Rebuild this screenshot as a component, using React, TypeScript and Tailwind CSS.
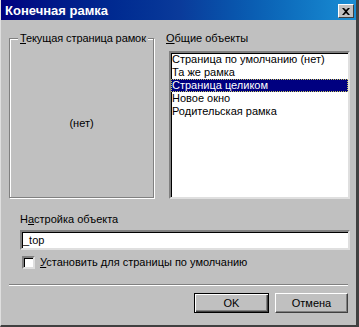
const font = { fontFamily: '"Liberation Sans", Arial, sans-serif' };

export default function App() {
  const items = [
    "Страница по умолчанию (нет)",
    "Та же рамка",
    "Страница целиком",
    "Новое окно",
    "Родительская рамка",
  ];

  return (
    <div
      className="relative w-[359px] h-[327px] bg-[#c0c0c0] text-[11px] text-black border-r-[3px] border-b-2 border-r-[#404040] border-b-[#404040] border-l border-l-[#dfdfdf] overflow-hidden"
      style={font}
    >
      {/* title bar */}
      <div className="h-[20px] flex items-center justify-between pl-[4px] pr-[2px] bg-gradient-to-r from-[#000080] via-[#0a3a9a] to-[#1a8ed4]">
        <span className="text-white font-bold text-[13px] leading-none">Конечная рамка</span>
        <div className="w-[16px] h-[14px] mt-[2px] bg-[#c0c0c0] border border-t-white border-l-white border-r-[#404040] border-b-[#404040] flex items-center justify-center">
          <svg width="8" height="7" viewBox="0 0 8 7">
            <path d="M0 0 L2 0 L4 2 L6 0 L8 0 L5 3.5 L8 7 L6 7 L4 5 L2 7 L0 7 L3 3.5 Z" fill="#000" />
          </svg>
        </div>
      </div>

      {/* body */}
      <div className="flex gap-[15px] pl-[8px] pr-[6px] pt-[11px]">
        {/* group box */}
        <div className="relative shrink-0 w-[145px] h-[160px] mt-[7px] border border-[#808080] shadow-[inset_1px_1px_0_#fff,1px_1px_0_#fff] flex items-center justify-center">
          <span className="absolute -top-[8px] left-[8px] bg-[#c0c0c0] px-[2px] leading-[14px] whitespace-nowrap tracking-[-0.1px]">
            <span className="underline">Т</span>екущая страница рамок
          </span>
          <span className="mt-[10px]">(нет)</span>
        </div>

        {/* list */}
        <div className="flex flex-col flex-1">
          <div className="leading-[14px] h-[14px] mb-[6px] -ml-[3px] whitespace-nowrap">
            <span className="underline">О</span>бщие объекты
          </div>
          <div className="h-[148px] bg-white border-2 border-t-[#808080] border-l-[#808080] border-r-[#dfdfdf] border-b-[#dfdfdf] shadow-[inset_1px_1px_0_#000]">
            {items.map((it, i) => (
              <div
                key={it}
                className={`h-[13px] leading-[13px] pl-[1px] whitespace-nowrap ${
                  i === 2 ? "bg-[#000080] text-white outline outline-1 outline-dotted outline-[#c8c860] -outline-offset-1" : ""
                }`}
              >
                {it}
              </div>
            ))}
          </div>
        </div>
      </div>

      {/* settings */}
      <div className="pl-[19px] pr-[6px] mt-[13px]">
        <div className="leading-[14px]">
          Н<span className="underline">а</span>стройка объекта
        </div>
        <div className="mt-[4px] h-[20px] bg-white border-2 border-t-[#808080] border-l-[#808080] border-r-[#dfdfdf] border-b-[#dfdfdf] shadow-[inset_1px_1px_0_#000] flex items-center pl-[1px]">
          _top
        </div>
        <div className="flex items-center gap-[5px] mt-[5px] ml-[2px] h-[14px]">
          <div className="w-[13px] h-[13px] bg-white border-2 border-t-[#808080] border-l-[#808080] border-r-[#dfdfdf] border-b-[#dfdfdf] shadow-[inset_1px_1px_0_#000]" />
          <span className="leading-[14px]">
            <span className="underline">У</span>становить для страницы по умолчанию
          </span>
        </div>
      </div>

      {/* separator */}
      <div className="ml-[8px] mr-[8px] mt-[15px] h-[2px] border-t border-t-[#808080] border-b border-b-white" />

      {/* buttons */}
      <div className="flex justify-end gap-[6px] pr-[8px] mt-[7px]">
        <button className="w-[75px] h-[20px] bg-[#c0c0c0] border border-black shadow-[inset_1px_1px_0_#fff,inset_-1px_-1px_0_#404040,inset_-2px_-2px_0_#808080] leading-none">
          OK
        </button>
        <button className="w-[73px] h-[20px] bg-[#c0c0c0] border border-t-white border-l-white border-r-[#404040] border-b-[#404040] shadow-[inset_-1px_-1px_0_#808080] leading-none">
          Отмена
        </button>
      </div>
    </div>
  );
}
